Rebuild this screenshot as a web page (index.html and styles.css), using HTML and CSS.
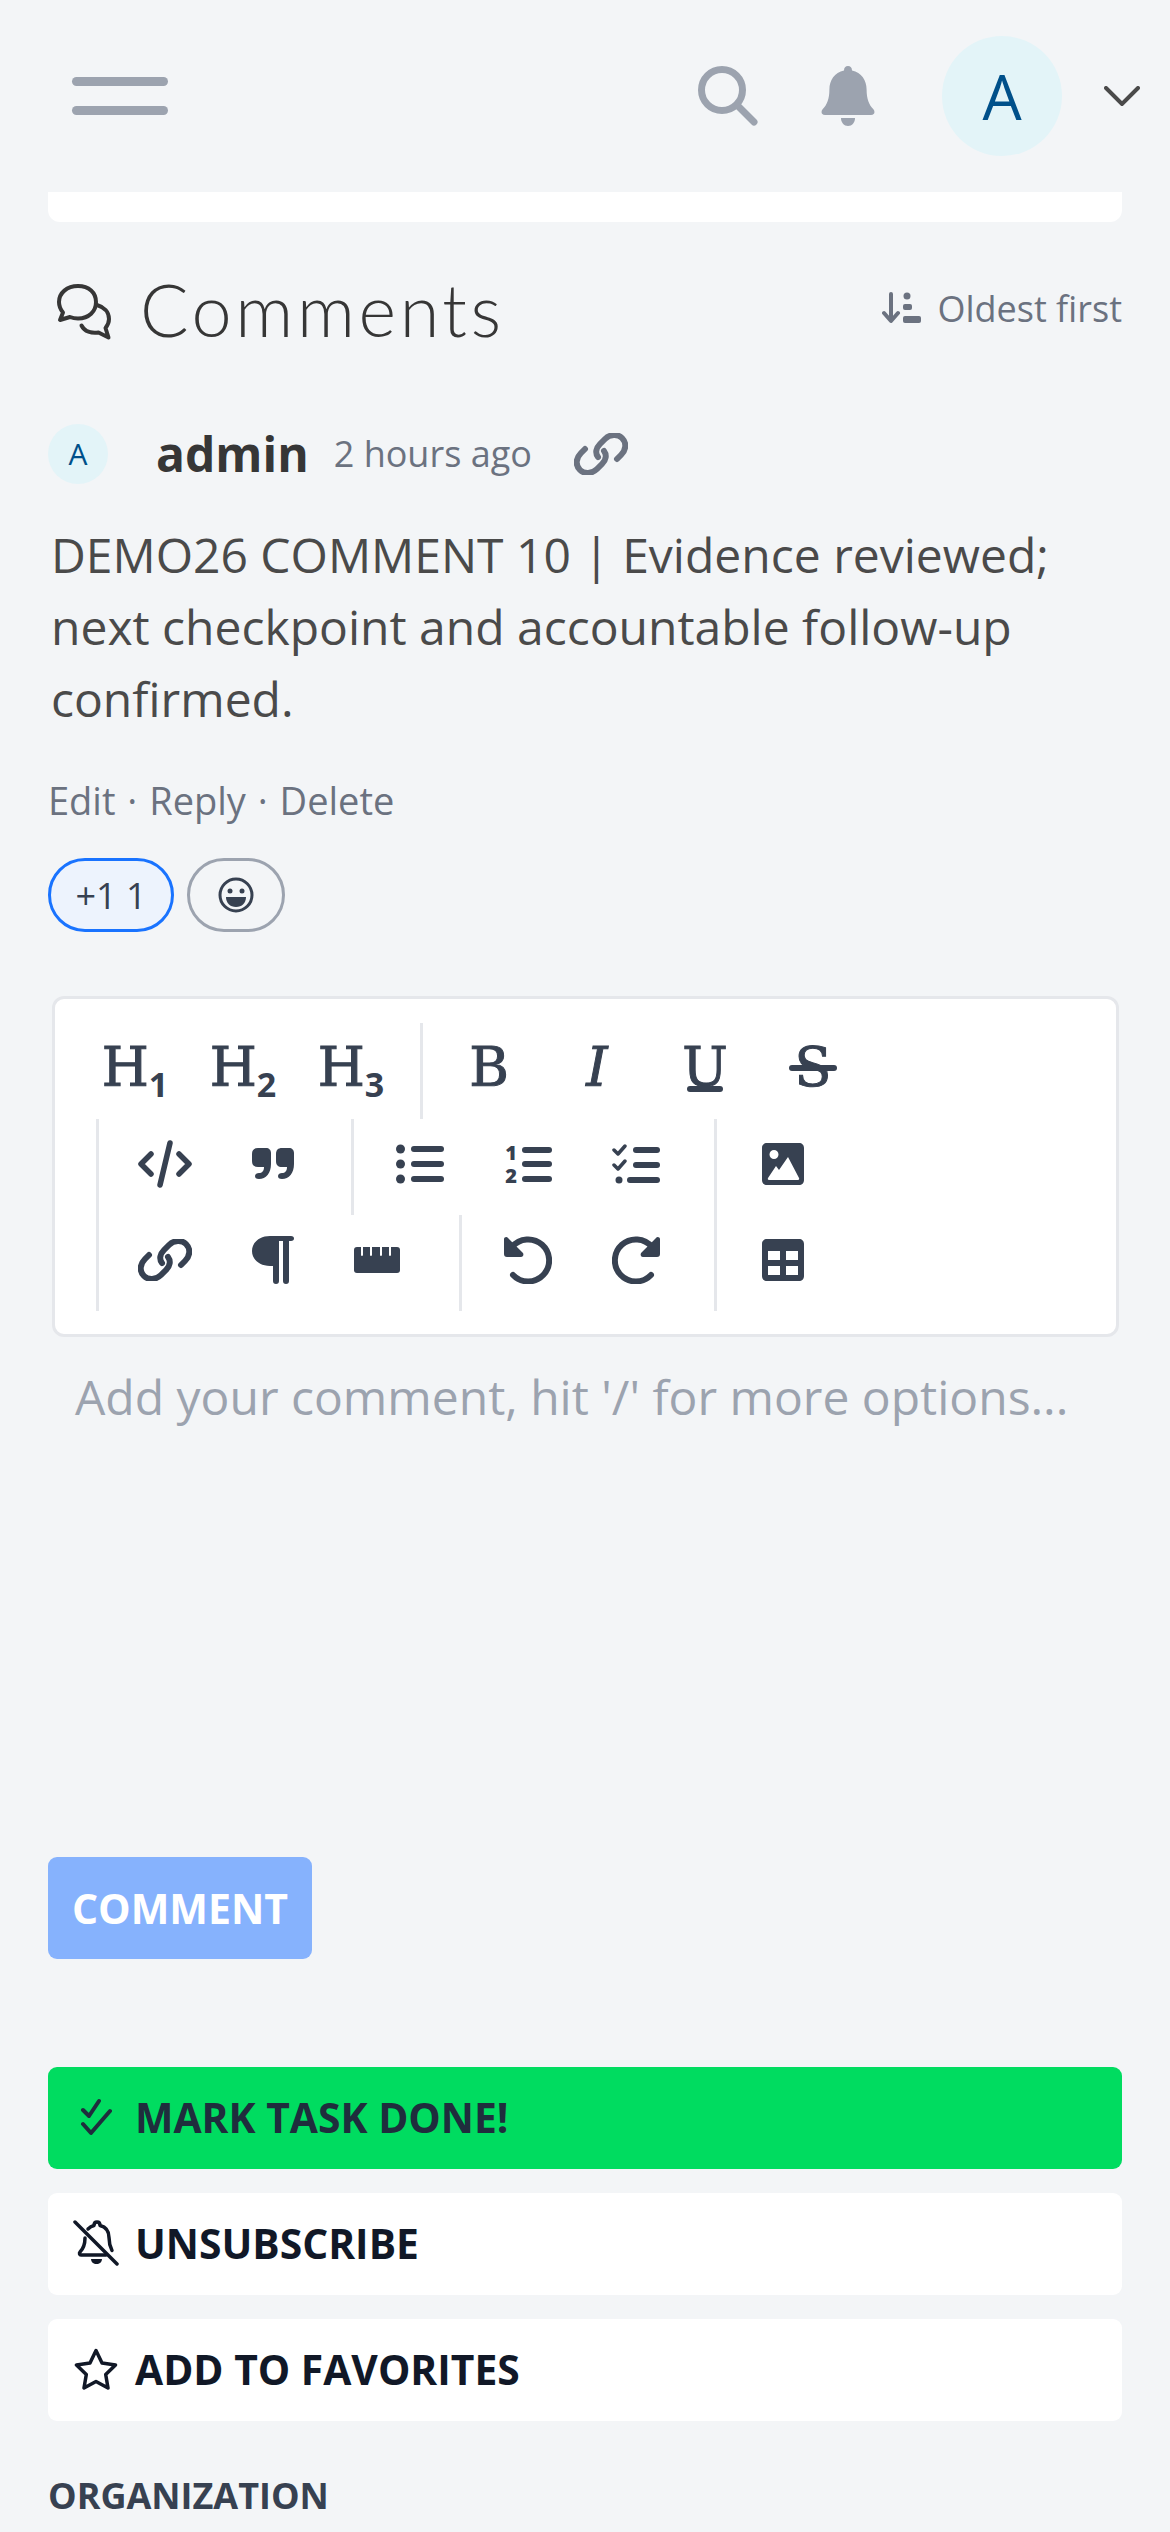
FILE: index.html
```html
<!DOCTYPE html>
<html lang="en">
<head>
    <meta charset="UTF-8">
    <meta name="viewport" content="width=device-width, initial-scale=1.0">
    <title>Task comments</title>
    <link rel="stylesheet" href="styles.css">
</head>
<body>
<div class="page">
    <header class="topbar">
        <button class="burger"><span></span><span></span></button>
        <div class="topbar-right">
            <svg class="top-search" viewBox="0 0 60 60"><circle cx="24" cy="24" r="20.5" fill="none" stroke="#9ca3af" stroke-width="7"/><path d="M40 40L56 56" stroke="#9ca3af" stroke-width="7" stroke-linecap="round"/></svg>
            <svg class="top-bell" viewBox="0 0 54 60"><path d="M27 0c2.500 0 4 1.800 4 4.400 9.500 1.900 14.600 9.800 14.600 19 0 9.500 2.400 15.300 6.800 19.900 1.800 1.900 1.500 5.700-2.400 5.700H4c-3.900 0-4.200-3.800-2.400-5.700 4.400-4.600 6.800-10.400 6.800-19.900 0-9.200 5.100-17.100 14.600-19C23 1.800 24.500 0 27 0z" fill="#9ca3af"/><path d="M20 52h14c0 4.500-3 8-7 8s-7-3.500-7-8z" fill="#9ca3af"/></svg>
            <div class="avatar-big">A</div>
            <svg class="top-chevron" viewBox="0 0 36 20"><path d="M2 2L18 18L34 2" fill="none" stroke="#4a4a4a" stroke-width="4" stroke-linecap="round"/></svg>
        </div>
    </header>

    <div class="strip"></div>

    <div class="comments-head">
        <h2 class="comments-title">
            <svg class="comments-icon" viewBox="0 0 56 56"><path d="M22 2C11 2 3 9 3 18c0 4 1.500 7.500 4 10.500L4 36l10-3c2.500 1 5 1.500 8 1.500 11 0 18-7 18-16.500S33 2 22 2z" fill="none" stroke="#363636" stroke-width="4" stroke-linejoin="round"/><path d="M41 21c7 2 12 7 12 14 0 3.500-1.500 6.500-3.500 9l3 9.500-10-5c-7 1-14-1-17-7" fill="none" stroke="#363636" stroke-width="4" stroke-linejoin="round" stroke-linecap="round"/></svg>
            <span>Comments</span>
        </h2>
        <div class="sort">
            <svg class="sort-icon" viewBox="0 0 40 32"><path d="M9 2v26M2 21l7 8 7-8" fill="none" stroke="#6b7280" stroke-width="4" stroke-linecap="round" stroke-linejoin="round"/><circle cx="25" cy="4" r="3.500" fill="#6b7280"/><rect x="21" y="12" width="9" height="6" rx="2" fill="#6b7280"/><rect x="21" y="24" width="18" height="7" rx="2" fill="#6b7280"/></svg>
            <span>Oldest first</span>
        </div>
    </div>

    <div class="comment-meta">
        <div class="avatar-small">A</div>
        <span class="comment-author">admin</span>
        <span class="comment-time">2 hours ago</span>
        <svg class="comment-link" viewBox="0 0 54 42"><path d="M24 24C21 20 22 15 26 11L31 6C36 1 44 1 48 5C53 10 52 17 47 22L43 26M30 18C33 22 32 27 28 31L23 36C18 41 10 41 6 37C1 32 2 25 7 20L11 16" fill="none" stroke="#6b7280" stroke-width="6" stroke-linecap="round"/></svg>
    </div>

    <p class="comment-body">DEMO26 COMMENT 10 | Evidence reviewed; next checkpoint and accountable follow-up confirmed.</p>

    <div class="comment-actions">Edit · Reply · Delete</div>

    <div class="reactions">
        <button class="reaction reaction-on">+1 1</button>
        <button class="reaction reaction-add">
            <svg viewBox="0 0 36 36" width="36" height="36"><circle cx="18" cy="18" r="16" fill="none" stroke="#374151" stroke-width="3"/><circle cx="12" cy="14" r="2.500" fill="#374151"/><circle cx="24" cy="14" r="2.500" fill="#374151"/><path d="M8 20h20c0 6-4 10-10 10S8 26 8 20z" fill="#374151"/></svg>
        </button>
    </div>

    <div class="editor">
        <div class="toolbar">
            <div class="tb-row">
                <div class="tb-group tb-group-first">
                    <button class="tb-btn tb-h">H<sub>1</sub></button>
                    <button class="tb-btn tb-h">H<sub>2</sub></button>
                    <button class="tb-btn tb-h">H<sub>3</sub></button>
                </div>
                <div class="tb-group">
                    <button class="tb-btn tb-b">B</button>
                    <button class="tb-btn tb-i">I</button>
                    <button class="tb-btn tb-u">U</button>
                    <button class="tb-btn tb-s">S</button>
                </div>
            </div>
            <div class="tb-lower">
                <div class="tb-rows">
                    <div class="tb-row">
                        <div class="tb-group tb-w2">
                            <button class="tb-btn"><svg width="54" height="48" viewBox="0 0 54 48"><path d="M13 14L3 24l10 10M41 14l10 10-10 10M32 3L22 45" fill="none" stroke="#374151" stroke-width="5.500" stroke-linecap="round" stroke-linejoin="round"/></svg></button>
                            <button class="tb-btn"><svg width="42" height="32" viewBox="0 0 42 32"><path d="M6 0h8c3 0 5 2 5 5v11c0 9-5 15-12 15-3 0-4-1-4-3s2-3 4-3c3 0 5-2 5-6H6c-4 0-6-2-6-6V6c0-4 2-6 6-6z" fill="#374151"/><path d="M29 0h8c3 0 5 2 5 5v11c0 9-5 15-12 15-3 0-4-1-4-3s2-3 4-3c3 0 5-2 5-6h-5c-4 0-6-2-6-6V6c0-4 2-6 6-6z" fill="#374151"/></svg></button>
                        </div>
                        <div class="tb-group tb-w3">
                            <button class="tb-btn"><svg width="48" height="40" viewBox="0 0 48 40"><g fill="#374151"><circle cx="4.500" cy="5" r="4.500"/><circle cx="4.500" cy="20" r="4.500"/><circle cx="4.500" cy="35" r="4.500"/><rect x="15" y="2" width="33" height="6" rx="3"/><rect x="15" y="17" width="33" height="6" rx="3"/><rect x="15" y="32" width="33" height="6" rx="3"/></g></svg></button>
                            <button class="tb-btn"><svg width="48" height="52" viewBox="0 -6 48 52"><g fill="#374151"><rect x="18" y="3" width="30" height="6" rx="3"/><rect x="18" y="17" width="30" height="6" rx="3"/><rect x="18" y="32" width="30" height="6" rx="3"/></g><text class="tb-num" x="7" y="16">1</text><text class="tb-num" x="7" y="39">2</text></svg></button>
                            <button class="tb-btn"><svg width="48" height="40" viewBox="0 0 48 40"><g fill="none" stroke="#374151" stroke-width="3.500" stroke-linecap="round" stroke-linejoin="round"><path d="M2 6l4 4 7-8M2 21l4 4 7-8"/></g><g fill="#374151"><circle cx="7" cy="36" r="3.500"/><rect x="21" y="3" width="27" height="6" rx="3"/><rect x="21" y="18" width="27" height="6" rx="3"/><rect x="15" y="33" width="33" height="6" rx="3"/></g></svg></button>
                        </div>
                    </div>
                    <div class="tb-row">
                        <div class="tb-group tb-w3">
                            <button class="tb-btn"><svg width="54" height="42" viewBox="0 0 54 42"><path d="M24 24C21 20 22 15 26 11L31 6C36 1 44 1 48 5C53 10 52 17 47 22L43 26M30 18C33 22 32 27 28 31L23 36C18 41 10 41 6 37C1 32 2 25 7 20L11 16" fill="none" stroke="#374151" stroke-width="6" stroke-linecap="round"/></svg></button>
                            <button class="tb-btn"><svg width="42" height="48" viewBox="0 0 42 48"><path d="M18 0h21c2 0 3 1 3 2.500S41 5 39 5h-2v40c0 2-1 3-3 3s-3-1-3-3V5h-4v40c0 2-1 3-3 3s-3-1-3-3V30h-3C7 30 0 23 0 15S7 0 18 0z" fill="#374151"/></svg></button>
                            <button class="tb-btn"><svg width="54" height="26" viewBox="0 0 54 26"><path d="M3 0h4v8c0 1.200 2 1.200 2 0V0h7v8c0 1.200 2 1.200 2 0V0h8v8c0 1.200 2 1.200 2 0V0h7v8c0 1.200 2 1.200 2 0V0h6c2 0 3 1 3 3v20c0 2-1 3-3 3H3c-2 0-3-1-3-3V3c0-2 1-3 3-3z" fill="#374151"/></svg></button>
                        </div>
                        <div class="tb-group tb-w2">
                            <button class="tb-btn"><svg width="48" height="48" viewBox="0 0 48 48"><path d="M8 11a21 21 0 1 1 1 28" fill="none" stroke="#374151" stroke-width="6" stroke-linecap="round"/><path d="M0 3c0-2 3-3 4-1l15 15c1 2 0 4-2 4H3c-2 0-3-1-3-3z" fill="#374151"/></svg></button>
                            <button class="tb-btn"><svg width="48" height="48" viewBox="0 0 48 48"><path d="M40 11a21 21 0 1 0-1 28" fill="none" stroke="#374151" stroke-width="6" stroke-linecap="round"/><path d="M48 3c0-2-3-3-4-1L29 17c-1 2 0 4 2 4h14c2 0 3-1 3-3z" fill="#374151"/></svg></button>
                        </div>
                    </div>
                </div>
                <div class="tb-group tb-stack">
                    <button class="tb-btn"><svg width="42" height="42" viewBox="0 0 42 42"><path fill-rule="evenodd" d="M5 0h32c3 0 5 2 5 5v32c0 3-2 5-5 5H5c-3 0-5-2-5-5V5c0-3 2-5 5-5zM12 7a4.500 4.500 0 1 0 0 9 4.500 4.500 0 0 0 0-9zM26 14L17 27l-3-4-8 12c-.5 1 0 2 1 2h29c1 0 1.500-1 1-2z" fill="#374151"/></svg></button>
                    <button class="tb-btn"><svg width="42" height="42" viewBox="0 0 42 42"><path fill-rule="evenodd" d="M5 0h32c3 0 5 2 5 5v32c0 3-2 5-5 5H5c-3 0-5-2-5-5V5c0-3 2-5 5-5zM6 12v9h12v-9zM24 12v9h12v-9zM6 27v9h12v-9zM24 27v9h12v-9z" fill="#374151"/></svg></button>
                </div>
            </div>
        </div>
        <div class="editor-input">Add your comment, hit '/' for more options...</div>
    </div>

    <button class="btn-comment">COMMENT</button>

    <div class="action-list">
        <button class="action action-done">
            <span class="action-icon"><svg width="32" height="38" viewBox="0 0 32 38"><path d="M3 12l6 6L19 3M3 26l8 9L30 13" fill="none" stroke="#1f2d3d" stroke-width="4" stroke-linecap="round" stroke-linejoin="round"/></svg></span>
            MARK TASK DONE!
        </button>
        <button class="action">
            <span class="action-icon"><svg width="46" height="46" viewBox="0 0 46 46"><path d="M2 2L44 44" stroke="#111827" stroke-width="3.500" stroke-linecap="round"/><path d="M15 9c2-2 4-3 6-3.500C21 3.500 22 2 24 2s3 1.500 3 3.500c6 1.500 9 6 9 12 0 6 1 9 3 13M12 18c0 6-2 11-5 14-1 1-.5 3 1 3h25" fill="none" stroke="#111827" stroke-width="3.500" stroke-linecap="round" stroke-linejoin="round"/><path d="M18 39h11c0 3-2.500 5-5.500 5S18 42 18 39z" fill="#111827"/></svg></span>
            UNSUBSCRIBE
        </button>
        <button class="action">
            <span class="action-icon"><svg width="44" height="42" viewBox="0 0 44 42"><path d="M22 2.500l6 12.500 13.500 2-9.800 9.500 2.300 13.500L22 33.500 10 40l2.300-13.500L2.500 17 16 15z" fill="none" stroke="#111827" stroke-width="3.500" stroke-linejoin="round"/></svg></span>
            ADD TO FAVORITES
        </button>
    </div>

    <h3 class="section-label">ORGANIZATION</h3>
</div>
</body>
</html>
```

FILE: styles.css
```css
* {
    box-sizing: border-box;
}
body {
    margin: 0;
    background: #f3f5f7;
    color: #4a4a4a;
    font-family: 'Open Sans', 'Noto Sans', sans-serif;
}
button {
    font-family: inherit;
    background: none;
    border: none;
    padding: 0;
}
.page {
    width: 1170px;
    height: 2532px;
    overflow: hidden;
}

/* top bar */
.topbar {
    height: 192px;
    display: flex;
    align-items: center;
    justify-content: space-between;
    padding: 0 30px 0 72px;
}
.burger {
    width: 96px;
    display: flex;
    flex-direction: column;
    gap: 20px;
}
.burger span {
    display: block;
    height: 9px;
    background: #9ca3af;
    border-radius: 5px;
}
.topbar-right {
    display: flex;
    align-items: center;
}
.top-search {
    width: 60px;
    height: 60px;
}
.top-bell {
    width: 54px;
    height: 60px;
    margin-left: 63px;
}
.avatar-big {
    width: 120px;
    height: 120px;
    margin-left: 67px;
    border-radius: 50%;
    background: #e3f4f8;
    color: #00508a;
    font-size: 62px;
    line-height: 120px;
    text-align: center;
}
.top-chevron {
    width: 36px;
    height: 20px;
    margin-left: 42px;
}
.strip {
    height: 30px;
    margin: 0 48px;
    background: #fff;
    border-radius: 0 0 12px 12px;
}

/* comments heading */
.comments-head {
    display: flex;
    align-items: center;
    justify-content: space-between;
    height: 100px;
    margin: 40px 48px 0;
}
.comments-title {
    display: flex;
    align-items: center;
    margin: 0 0 6px;
    font-family: 'Lato', sans-serif;
    font-weight: 300;
    font-size: 72px;
    line-height: 94px;
    letter-spacing: 3.6px;
    color: #363636;
}
.comments-icon {
    width: 56px;
    height: 56px;
    margin: 6px 28px 0 8px;
}
.sort {
    display: flex;
    align-items: center;
    gap: 15px;
    font-size: 36px;
    color: #6b7280;
    margin-bottom: 8px;
}
.sort-icon {
    width: 40px;
    height: 32px;
}

/* comment */
.comment-meta {
    display: flex;
    align-items: center;
    height: 60px;
    margin: 62px 48px 0;
}
.avatar-small {
    width: 60px;
    height: 60px;
    border-radius: 50%;
    background: #e3f4f8;
    color: #00508a;
    font-size: 30px;
    line-height: 60px;
    text-align: center;
}
.comment-author {
    margin-left: 48px;
    font-size: 48px;
    font-weight: 700;
    line-height: 60px;
    color: #363636;
}
.comment-time {
    margin-left: 25px;
    font-size: 36px;
    line-height: 56px;
    color: #6b7280;
}
.comment-link {
    width: 54px;
    height: 42px;
    margin-left: 42px;
}
.comment-body {
    margin: 35px 48px 0 51px;
    font-size: 48px;
    line-height: 72px;
}
.comment-actions {
    margin: 38px 48px 0;
    font-size: 38px;
    line-height: 54px;
    word-spacing: 2px;
    color: #6b7280;
}
.reactions {
    display: flex;
    gap: 13px;
    margin: 31px 48px 0;
}
.reaction {
    height: 74px;
    border-radius: 37px;
    border: 3px solid #9ca3af;
    display: flex;
    align-items: center;
    justify-content: center;
    color: #374151;
    font-size: 36px;
}
.reaction-on {
    width: 126px;
    border-color: #1973ff;
    background: #edf3fd;
}
.reaction-add {
    width: 98px;
}

/* editor */
.editor {
    margin: 64px 51px 0 52px;
}
.toolbar {
    background: #fff;
    border: 3px solid #e5e7eb;
    border-radius: 12px;
    padding: 24px 0 23px 26px;
}
.tb-row {
    display: flex;
    height: 96px;
}
.tb-lower {
    display: flex;
    margin-left: 15px;
}
.tb-group {
    display: flex;
    border-left: 3px solid #e5e7eb;
    padding: 0 12px;
}
.tb-group-first {
    border-left: none;
    padding: 0 15px 0 0;
}
.tb-w2 {
    width: 255px;
}
.tb-w3 {
    width: 363px;
}
.tb-stack {
    flex-direction: column;
}
.tb-btn {
    position: relative;
    width: 108px;
    height: 96px;
    padding-bottom: 6px;
    display: flex;
    align-items: center;
    justify-content: center;
    color: #374151;
    font-size: 54px;
    line-height: 1;
}
.tb-h,
.tb-b,
.tb-i,
.tb-u,
.tb-s {
    font-family: 'DejaVu Serif', serif;
    -webkit-text-stroke: 1px #374151;
}
.tb-h {
    display: block;
    line-height: 90px;
    text-align: center;
}
.tb-h sub {
    font-family: 'Open Sans', sans-serif;
    font-size: 34px;
    font-weight: 700;
    vertical-align: -11px;
    line-height: 0;
    -webkit-text-stroke: 0;
}
.tb-i {
    font-style: italic;
}
.tb-u::after,
.tb-s::after {
    content: "";
    position: absolute;
    left: 50%;
    height: 6px;
    background: #374151;
    border-radius: 3px;
}
.tb-u::after {
    top: 63px;
    width: 36px;
    margin-left: -18px;
}
.tb-s::after {
    top: 42px;
    width: 48px;
    margin-left: -24px;
}
.tb-num {
    font-family: 'Open Sans', sans-serif;
    font-size: 20px;
    font-weight: 800;
    fill: #374151;
    text-anchor: middle;
}
.editor-input {
    height: 72px;
    margin-top: 24px;
    padding-left: 23px;
    font-size: 48px;
    line-height: 72px;
    color: #9ca3af;
    white-space: nowrap;
}

/* buttons */
.btn-comment {
    display: block;
    width: 264px;
    height: 102px;
    margin: 424px 0 0 48px;
    background: #86b2fd;
    border-radius: 9px;
    color: #fff;
    font-size: 41px;
    font-weight: 700;
}
.action-list {
    display: flex;
    flex-direction: column;
    gap: 24px;
    margin: 108px 48px 0;
}
.action {
    display: flex;
    align-items: center;
    height: 102px;
    padding: 0 0 2px 24px;
    background: #fff;
    border-radius: 9px;
    color: #111827;
    font-size: 40.8px;
    font-weight: 700;
}
.action-done {
    background: #00dc60;
    color: #1f2d3d;
}
.action-icon {
    width: 48px;
    margin-right: 15px;
    display: flex;
    justify-content: center;
}
.section-label {
    margin: 57px 0 0 48px;
    font-size: 36px;
    line-height: 36px;
    font-weight: 700;
    color: #374151;
}
```
